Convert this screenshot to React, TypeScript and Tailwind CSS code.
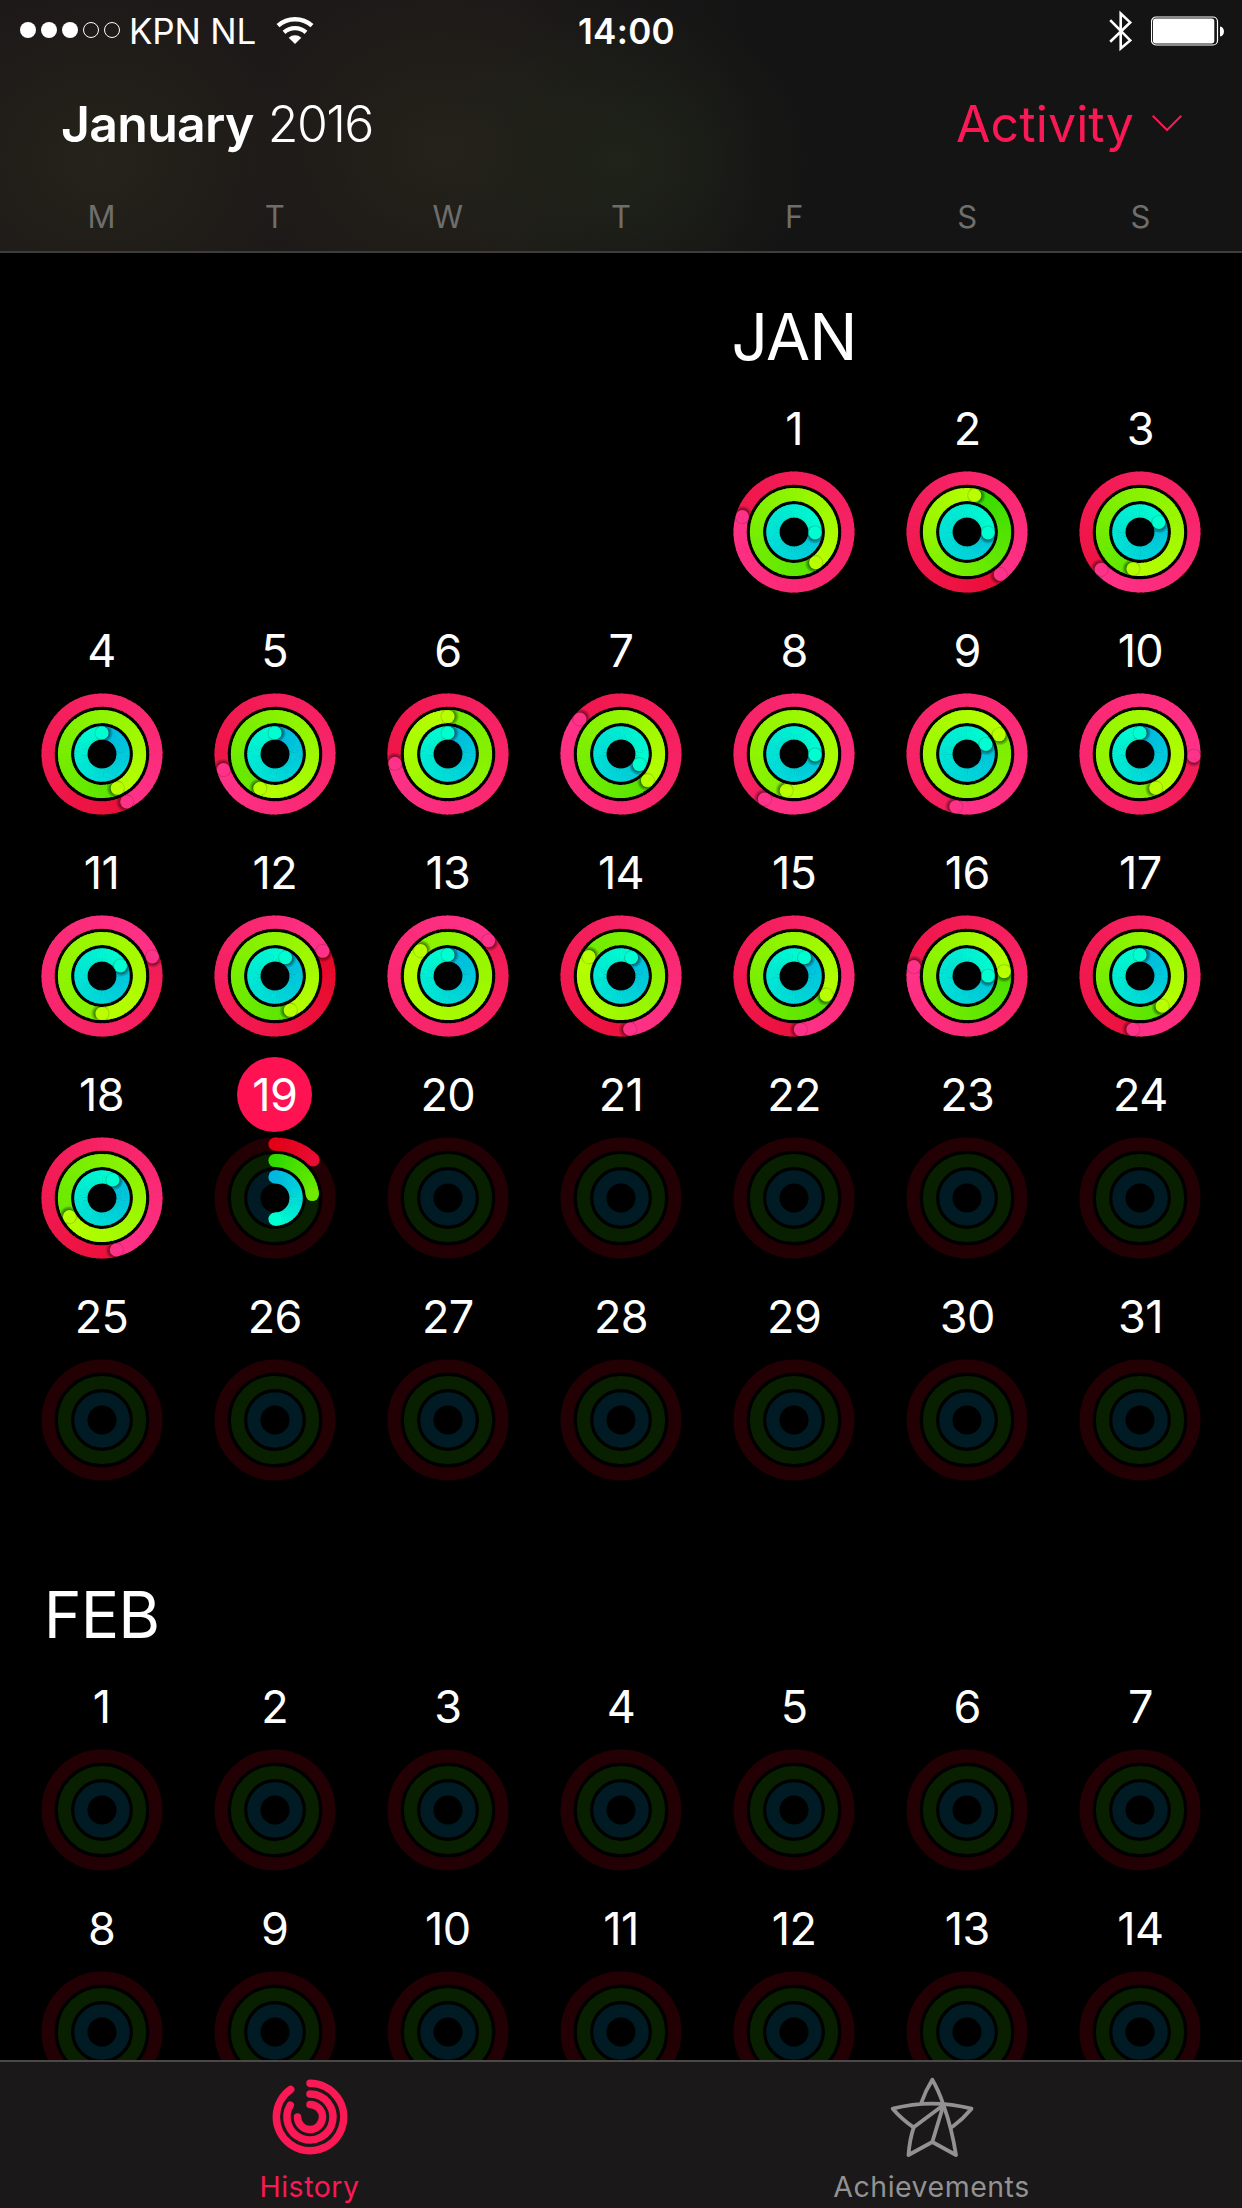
type Progress = [move: number, exercise: number, stand: number];
type RGB = [number, number, number];

interface Month {
  label: string;
  offset: number;
  days: number;
  className: string;
}

const WEEKDAYS = ['M', 'T', 'W', 'T', 'F', 'S', 'S'];
const TODAY = 19;

const MONTHS: Month[] = [
  { label: 'JAN', offset: 4, days: 31, className: '' },
  { label: 'FEB', offset: 0, days: 14, className: 'mt-[30px]' },
];

// Laps per ring, 1 = goal reached
const HISTORY: Progress[] = [
  [1.796, 1.402, 1.256],
  [1.394, 1.033, 1.256],
  [1.628, 1.53, 1.175],
  [1.424, 1.433, 1],
  [1.703, 1.566, 1],
  [1.722, 2, 1],
  [1.862, 1.375, 1.333],
  [2.592, 2.533, 1.256],
  [2.533, 2.164, 1.175],
  [2.256, 2.431, 1],
  [2.192, 2.5, 1.17],
  [1.174, 1.433, 1.083],
  [2.136, 2.869, 1],
  [1.474, 1.836, 1.083],
  [1.481, 1.335, 1.083],
  [1.778, 1.231, 1.25],
  [1.521, 1.399, 1],
  [1.457, 1.667, 1.086],
  [0.125, 0.235, 0.5],
];

const RING_WIDTH = 13.2;
const CENTER = 61;

const RINGS: { radius: number; track: string; from: RGB; to: RGB; clip: string }[] = [
  { radius: 53.9, track: '#220003', from: [226, 0, 22], to: [255, 50, 137], clip: 'ring-move' },
  { radius: 37.5, track: '#082000', from: [48, 218, 0], to: [184, 255, 0], clip: 'ring-exercise' },
  { radius: 21.1, track: '#001b23', from: [0, 184, 224], to: [0, 255, 208], clip: 'ring-stand' },
];

function point(radius: number, turns: number) {
  const a = turns * Math.PI * 2;
  return [CENTER + radius * Math.sin(a), CENTER - radius * Math.cos(a)];
}

function mix(from: RGB, to: RGB, t: number) {
  return `rgb(${from.map((c, i) => Math.round(c + (to[i] - c) * t)).join(',')})`;
}

function annulus(radius: number) {
  const circle = (r: number) =>
    `M${CENTER - r} ${CENTER}a${r} ${r} 0 1 0 ${r * 2} 0a${r} ${r} 0 1 0 ${-r * 2} 0Z`;
  return circle(radius + RING_WIDTH / 2) + circle(radius - RING_WIDTH / 2);
}

function Ring({ ring, value }: { ring: (typeof RINGS)[number]; value: number }) {
  const { radius, from, to, clip } = ring;
  const start = Math.max(0, value - 1);
  const span = value - start;
  const steps = Math.ceil(span * 72);
  const strength = Math.min(1, value * 2);
  const colorAt = (v: number) => mix(from, to, (v / value) * strength);
  const [ex, ey] = point(radius, value);
  const [sx, sy] = point(radius, value + 1.6 / (radius * 2 * Math.PI));
  const [bx, by] = point(radius, 0);

  return (
    <g>
      {value < 1 && <circle cx={bx} cy={by} r={RING_WIDTH / 2} fill={colorAt(0)} />}
      {Array.from({ length: steps }, (_, i) => {
        const a = start + (span * i) / steps;
        const b = start + (span * (i + 1)) / steps;
        const [x1, y1] = point(radius, a);
        // small overlap hides the seams
        const [x2, y2] = point(radius, i < steps - 1 ? b + 0.004 : b);
        return (
          <path
            key={i}
            d={`M${x1} ${y1}A${radius} ${radius} 0 0 1 ${x2} ${y2}`}
            fill="none"
            stroke={colorAt((a + b) / 2)}
            strokeWidth={RING_WIDTH}
          />
        );
      })}
      {value >= 1 && (
        <g clipPath={`url(#${clip})`}>
          <circle cx={sx} cy={sy} r={RING_WIDTH / 2 + 3} fill="url(#cap-shadow)" />
        </g>
      )}
      <circle cx={ex} cy={ey} r={RING_WIDTH / 2} fill={colorAt(value)} />
    </g>
  );
}

function ActivityRings({ progress }: { progress?: Progress }) {
  return (
    <svg className="block w-[122px] h-[122px]" viewBox="0 0 122 122">
      {RINGS.map((ring, i) => (
        <g key={ring.clip}>
          <circle
            cx={CENTER}
            cy={CENTER}
            r={ring.radius}
            fill="none"
            stroke={ring.track}
            strokeWidth={RING_WIDTH}
          />
          {progress && <Ring ring={ring} value={progress[i]} />}
        </g>
      ))}
    </svg>
  );
}

function RingDefs() {
  return (
    <svg className="absolute w-0 h-0" aria-hidden="true">
      <defs>
        <radialGradient id="cap-shadow">
          <stop offset="0.6" stopColor="#000" stopOpacity="0.45" />
          <stop offset="1" stopColor="#000" stopOpacity="0" />
        </radialGradient>
        {RINGS.map((ring) => (
          <clipPath key={ring.clip} id={ring.clip}>
            <path d={annulus(ring.radius)} clipRule="evenodd" />
          </clipPath>
        ))}
      </defs>
    </svg>
  );
}

function StatusBar() {
  return (
    <div className="relative flex h-[62px] items-center justify-between pl-5 pr-[17px]">
      <div className="flex items-center">
        <svg className="w-[102px] h-[18px]" viewBox="0 0 102 18">
          <circle cx="8" cy="8" r="8" fill="#fff" />
          <circle cx="29" cy="8" r="8" fill="#fff" />
          <circle cx="50" cy="8" r="8" fill="#fff" />
          <circle cx="71" cy="8" r="7.5" fill="none" stroke="#fff" />
          <circle cx="92" cy="8" r="7.5" fill="none" stroke="#fff" />
        </svg>
        <span className="ml-[7px] w-[130px] whitespace-nowrap text-[35px] leading-[62px] tracking-[-0.2px]">KPN NL</span>
        <svg className="ml-[17px] w-[38px] h-[28px]" viewBox="0 0 38 28" fill="none" stroke="#fff">
          <path d="M2 8.7A25.5 25.5 0 0 1 36 8.7" strokeWidth="4.4" />
          <path d="M8 15.4A16.5 16.5 0 0 1 30 15.4" strokeWidth="4.2" />
          <path d="M19 27l-6.3-6.2a9.2 9.2 0 0 1 12.6 0Z" fill="#fff" stroke="none" />
        </svg>
      </div>
      <div className="absolute inset-x-0 top-0 pl-[11px] text-center text-[35px] font-semibold leading-[62px] tracking-[0.3px]">
        14:00
      </div>
      <div className="flex items-center">
        <svg className="w-[24px] h-[42px]" viewBox="0 0 24 42" fill="none" stroke="#fff" strokeWidth="2.6">
          <path d="M1.2 10.2 21.2 30.4 11.7 38.5V3.5L21.2 12.4 1.2 31.8" />
        </svg>
        <svg className="ml-[18px] w-[74px] h-[30px]" viewBox="0 0 74 30">
          <rect x="0.5" y="1" width="66" height="28" rx="4.5" fill="none" stroke="#fff" strokeWidth="1.2" />
          <rect x="2" y="2.6" width="61.3" height="24.8" rx="2.6" fill="#fff" />
          <path d="M69 10.5c5.3 0.6 5.3 9.4 0 10Z" fill="#fff" />
        </svg>
      </div>
    </div>
  );
}

function Header() {
  return (
    <header className="h-[253px] shrink-0 border-b-2 border-[#3d3d3d] bg-[#141414] bg-[radial-gradient(ellipse_190px_160px_at_620px_160px,#1f2319_0%,transparent_100%),radial-gradient(ellipse_200px_170px_at_440px_150px,#25221a_0%,transparent_100%),radial-gradient(ellipse_200px_170px_at_100px_160px,#25231a_0%,transparent_100%),linear-gradient(to_right,#1d1919_0%,#1c1918_42%,#141414_61%)]">
      <StatusBar />
      <div className="flex h-[124px] items-center justify-between pl-[61px] pr-[60px] text-[50px] leading-[124px]">
        <h1 className="whitespace-nowrap">
          <span className="font-semibold tracking-[-0.7px]">January</span>{' '}
          <span className="font-light tracking-[-1.6px]">2016</span>
        </h1>
        <button className="flex items-center text-[#fa1955]">
          <span className="tracking-[0.1px]">Activity</span>
          <svg className="ml-[18px] w-[30px] h-[18px]" viewBox="0 0 30 18" fill="none" stroke="currentColor" strokeWidth="2">
            <path d="M0.7 0.8 15 15 29.3 0.8" />
          </svg>
        </button>
      </div>
      <div className="grid grid-cols-7 px-[15px] text-center text-[31px] leading-[62px] text-[#6e6e6c]">
        {WEEKDAYS.map((d, i) => (
          <span key={i}>{d}</span>
        ))}
      </div>
    </header>
  );
}

function DayCell({ day, progress, isToday }: { day: number; progress?: Progress; isToday: boolean }) {
  return (
    <div className="flex h-[222px] flex-col items-center">
      <div
        className={`flex h-[75px] w-[75px] items-center justify-center rounded-full text-[45px] leading-[75px] tracking-[-0.6px] ${
          isToday ? 'bg-[#ff1251]' : ''
        }`}
      >
        {day}
      </div>
      <div className="mt-[5px]">
        <ActivityRings progress={progress} />
      </div>
    </div>
  );
}

function MonthSection({ month, history }: { month: Month; history: Progress[] }) {
  const days = Array.from({ length: month.days }, (_, i) => i + 1);
  const blanks = Array.from({ length: month.offset });

  return (
    <section className={month.className}>
      <div className="grid h-[138px] grid-cols-7 pt-[44px] text-center text-[64px] leading-[80px] tracking-[-0.8px]">
        {blanks.map((_, i) => (
          <span key={i} />
        ))}
        <h2>{month.label}</h2>
      </div>
      <div className="grid grid-cols-7">
        {blanks.map((_, i) => (
          <span key={i} />
        ))}
        {days.map((day) => (
          <DayCell
            key={day}
            day={day}
            progress={history[day - 1]}
            isToday={history.length > 0 && day === TODAY}
          />
        ))}
      </div>
    </section>
  );
}

function HistoryIcon() {
  return (
    <svg className="w-[76px] h-[76px]" viewBox="-38 -38 76 76" fill="none" stroke="currentColor" strokeWidth="7.5" strokeLinecap="round">
      <path d="M0 -33.7A33.7 33.7 0 1 1 -19.3 -27.6" />
      <path d="M0 -23A23 23 0 1 1 -19.7 -11.9" />
      <path d="M0 -12.5A12.5 12.5 0 1 1 -12.5 0" />
    </svg>
  );
}

function StarIcon() {
  return (
    <svg className="w-[84px] h-[84px]" viewBox="0 0 84 84" fill="none" stroke="currentColor" strokeWidth="3.8" strokeLinecap="round" strokeLinejoin="round">
      <path d="M31 28.5Q35.5 15.5 42.3 4.7Q48.5 15 53.5 30Q62 54 66 80L42.3 67 18.5 80Q19.5 65 23.7 52.3Q12 44.5 2.7 33.7Q42 23.5 81.5 33.7Q73 44 62.5 51.7" />
      <path d="M23.7 52.3 53.5 30 42.3 67" />
    </svg>
  );
}

function TabBar() {
  return (
    <nav className="grid h-[148px] shrink-0 grid-cols-2 border-t-2 border-[#4a4848] bg-[#1a1818] text-[28.5px] leading-[34px]">
      <button className="flex flex-col items-center pt-[17px] pr-[2px] text-[#fa1955]">
        <HistoryIcon />
        <span className="mt-[15px] tracking-[0.5px]">History</span>
      </button>
      <button className="flex flex-col items-center pt-[13px] pl-0 text-[#929292]">
        <StarIcon />
        <span className="mt-[11px] tracking-[0.5px]">Achievements</span>
      </button>
    </nav>
  );
}

export default function App() {
  return (
    <div className="flex h-[2208px] w-[1242px] flex-col overflow-hidden bg-black font-['Inter','Liberation_Sans',sans-serif] text-white">
      <RingDefs />
      <Header />
      <main className="min-h-0 flex-1 overflow-hidden px-[15px]">
        {MONTHS.map((month, i) => (
          <MonthSection key={month.label} month={month} history={i === 0 ? HISTORY : []} />
        ))}
      </main>
      <TabBar />
    </div>
  );
}
